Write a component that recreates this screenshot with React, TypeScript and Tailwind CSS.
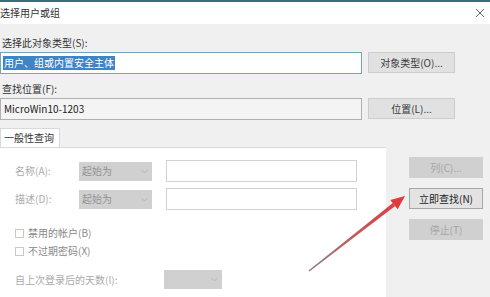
import React from 'react'

function Btn({label, disabled, strong, w}: {label: string; disabled?: boolean; strong?: boolean; w: string}) {
    const tone = disabled
        ? 'bg-[#d0d0d0] border-[#d0d0d0] text-[#a6a6a6]'
        : strong
            ? 'bg-[#e3e3e3] border-[#a8a8a8] text-[#222]'
            : 'bg-[#e1e1e1] border-[#cdcdcd] text-[#3a3a3a]'
    return (
        <div className={`${w} h-[21px] border flex items-center justify-center text-[10px] ${tone}`}>
            {label}
        </div>
    )
}

function Dropdown({text, w}: {text?: string; w: string}) {
    return (
        <div className={`${w} h-[19px] bg-[#d0d0d0] flex items-center justify-between px-[3px] text-[10px] text-[#929292]`}>
            <span>{text}</span>
            <svg width="7" height="5" viewBox="0 0 7 5" className="mr-[1px]">
                <path d="M0.5 1 L3.5 4 L6.5 1" fill="none" stroke="#b4b4b4" strokeWidth="1"/>
            </svg>
        </div>
    )
}

function Check({label}: {label: string}) {
    return (
        <div className="flex items-center gap-[4px] h-[14px] pl-[15px] text-[10px] text-[#8a8a8a]">
            <div className="w-[9px] h-[9px] border border-[#c8c8c8] bg-white"/>
            <span>{label}</span>
        </div>
    )
}

export default function App() {
    return (
        <div className="w-[490px] h-[297px] overflow-hidden bg-[#f0f0f0] relative font-['Noto_Sans_CJK_SC',sans-serif] leading-none">
            <div className="h-[2px] bg-[#3b6b78]"/>
            <div className="h-[22px] bg-white flex items-center justify-between pr-[5px]">
                <span className="text-[10px] text-[#333]">选择用户或组</span>
                <svg width="10" height="10" viewBox="0 0 10 10">
                    <path d="M1 1 L9 9 M9 1 L1 9" stroke="#666" strokeWidth="1"/>
                </svg>
            </div>

            <div className="pl-[2px] mt-[12px] h-[14px] flex items-center text-[10px] text-[#333]">选择此对象类型(S):</div>
            <div className="flex items-start gap-[6px] mt-[2px]">
                <div className="w-[362px] h-[22px] bg-white border border-[#74a7b6] flex items-center pl-[2px]">
                    <span className="bg-[#3f84c6] text-white text-[10px] px-[1px] py-[2px]">用户、组或内置安全主体</span>
                </div>
                <Btn label="对象类型(O)..." w="w-[87px]"/>
            </div>

            <div className="pl-[2px] mt-[8px] h-[14px] flex items-center text-[10px] text-[#333]">查找位置(F):</div>
            <div className="flex items-start gap-[6px] mt-[2px]">
                <div className="w-[362px] h-[22px] bg-[#f4f4f4] border border-[#b0b0b0] flex items-center pl-[3px] text-[10px] text-[#222]">
                    MicroWin10-1203
                </div>
                <Btn label="位置(L)..." w="w-[87px]"/>
            </div>

            <div className="mt-[8px] flex items-end border-b border-[#d9d9d9] w-[386px]">
                <div className="w-[60px] h-[19px] bg-white border border-b-0 border-[#d9d9d9] flex items-center pl-[3px] text-[10px] text-[#333]">
                    一般性查询
                </div>
            </div>

            <div className="flex">
                <div className="w-[386px] h-[150px] bg-white pt-[12px]">
                    <div className="flex items-center h-[22px]">
                        <span className="w-[79px] pl-[15px] text-[10px] text-[#ababab]">名称(A):</span>
                        <Dropdown text="起始为" w="w-[73px]"/>
                        <div className="ml-[14px] w-[191px] h-[22px] border border-[#d2d2d2] bg-white"/>
                    </div>
                    <div className="flex items-center h-[22px] mt-[6px]">
                        <span className="w-[79px] pl-[15px] text-[10px] text-[#ababab]">描述(D):</span>
                        <Dropdown text="起始为" w="w-[73px]"/>
                        <div className="ml-[14px] w-[191px] h-[22px] border border-[#d2d2d2] bg-white"/>
                    </div>
                    <div className="mt-[16px]">
                        <Check label="禁用的帐户(B)"/>
                    </div>
                    <div className="mt-[4px]">
                        <Check label="不过期密码(X)"/>
                    </div>
                    <div className="flex items-center mt-[12px]">
                        <span className="w-[164px] pl-[15px] text-[10px] text-[#ababab]">自上次登录后的天数(I):</span>
                        <Dropdown w="w-[58px]"/>
                    </div>
                </div>
                <div className="flex flex-col gap-[10px] pl-[23px] pt-[9px]">
                    <Btn label="列(C)..." disabled w="w-[74px]"/>
                    <Btn label="立即查找(N)" strong w="w-[74px]"/>
                    <Btn label="停止(T)" disabled w="w-[74px]"/>
                </div>
            </div>

            <svg className="absolute left-0 top-0 pointer-events-none" width="490" height="297">
                <defs>
                    <linearGradient id="arw" x1="309" y1="271" x2="405" y2="196" gradientUnits="userSpaceOnUse">
                        <stop offset="0" stopColor="#8c7a7c"/>
                        <stop offset="0.5" stopColor="#c65a5c"/>
                        <stop offset="1" stopColor="#e2393c"/>
                    </linearGradient>
                </defs>
                <polygon points="309.4,271.6 308.6,270.4 392.8,203.1 395.2,206.1" fill="url(#arw)"/>
                <polygon points="405,196 397.7,209.3 390.3,199.9" fill="#e2393c"/>
            </svg>
        </div>
    )
}
